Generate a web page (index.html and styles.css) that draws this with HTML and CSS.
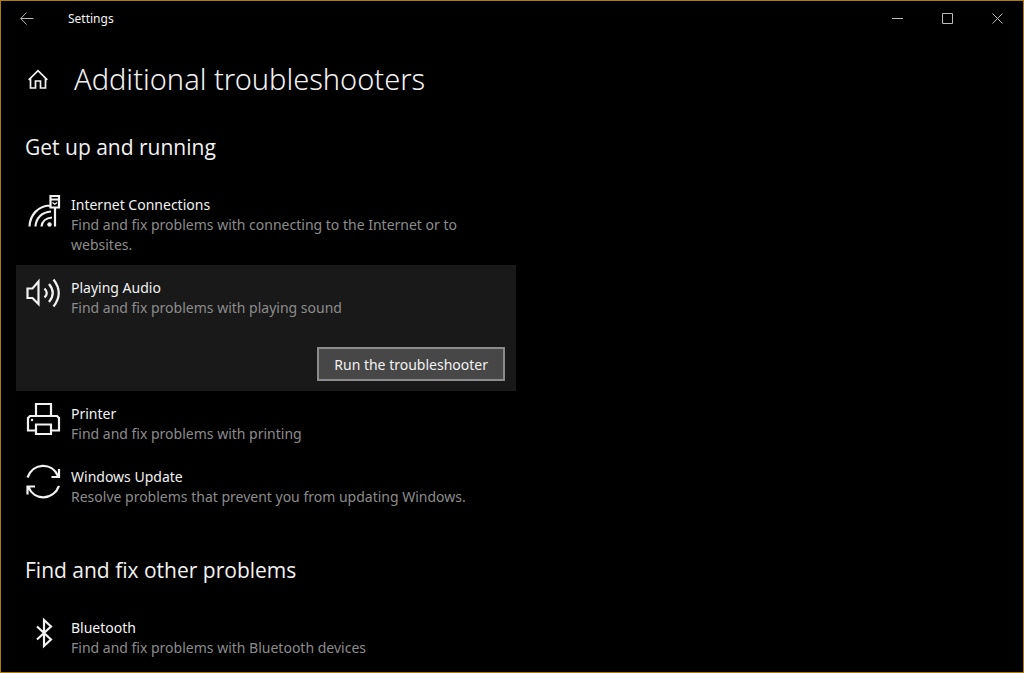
FILE: index.html
```html
<!DOCTYPE html>
<html lang="en">
<head>
  <meta charset="UTF-8">
  <meta name="viewport" content="width=device-width, initial-scale=1.0">
  <title>Settings</title>
  <link rel="stylesheet" href="styles.css">
</head>
<body>
  <div class="window">
    <header class="titlebar">
      <button class="back" aria-label="Back">
        <svg width="14" height="14" viewBox="0 0 14 14"><path d="M6.5 .5L.8 6.500l5.700 6M.8 6.500h12.700"/></svg>
      </button>
      <span class="app-name">Settings</span>
      <div class="window-buttons">
        <button aria-label="Minimize">
          <svg width="12" height="12" viewBox="0 0 12 12"><path d="M0 5.5h11"/></svg>
        </button>
        <button aria-label="Maximize">
          <svg width="12" height="12" viewBox="0 0 12 12"><path d="M.5 .5h10v10h-10z"/></svg>
        </button>
        <button aria-label="Close">
          <svg width="12" height="12" viewBox="0 0 12 12"><path d="M.5 .5l10 10M10.5 .5l-10 10"/></svg>
        </button>
      </div>
    </header>

    <main>
      <div class="page-title">
        <a href="#" class="home" aria-label="Home">
          <svg width="20" height="20" viewBox="0 0 20 20"><path d="M.7 10.8L10 1.7l9.3 9.1M2.500 9.500V19h5v-7h5v7h5V9.500"/></svg>
        </a>
        <h1>Additional troubleshooters</h1>
      </div>

      <section>
        <h2>Get up and running</h2>
        <ul class="list">
          <li class="item">
            <svg class="icon" viewBox="0 0 36 36">
              <path d="M4.5 34.5C5 23 13 14 24.5 13.5M10.5 34.5C11 26 17 20 26 19.5M16.5 34.5C17 29.5 21 26 27 25.5M30 16v18.5M25.5 4h8.5v11.5h-8.5zM25.5 7.5h8.5"/>
              <path class="thin" d="M27.5 10.5l2.3 1.8 2.2-1.8"/>
              <circle class="fill" cx="24.5" cy="32.5" r="2.2"/>
            </svg>
            <div class="text">
              <h3>Internet Connections</h3>
              <p>Find and fix problems with connecting to the Internet or to websites.</p>
            </div>
          </li>
          <li class="item selected">
            <svg class="icon" viewBox="0 0 36 36">
              <path d="M2.5 13.5H7.5L13.5 6.5V29L7.5 23H2.5zM19.5 13.5Q24 18 19.5 22.5M24 9Q31.5 18 24 27M28.5 4.5Q39 18 28.5 31.5"/>
            </svg>
            <div class="text">
              <h3>Playing Audio</h3>
              <p>Find and fix problems with playing sound</p>
            </div>
            <button class="run">Run the troubleshooter</button>
          </li>
          <li class="item">
            <svg class="icon" viewBox="0 0 36 36">
              <path d="M11 15V3h15v12M11 29.5H3V17l2-2h27l2 2v12.5h-8M11 23.5h15V33H11z"/>
              <circle class="fill" cx="7" cy="19" r="1.2"/>
            </svg>
            <div class="text">
              <h3>Printer</h3>
              <p>Find and fix problems with printing</p>
            </div>
          </li>
          <li class="item">
            <svg class="icon" viewBox="0 0 36 36">
              <path d="M2.5 13.5C8-1.5 27-2 33 12M26.5 13h7.5V5M34 22C28 37 9 37 3.5 23M10 22.5H2.5V30.5"/>
            </svg>
            <div class="text">
              <h3>Windows Update</h3>
              <p>Resolve problems that prevent you from updating Windows.</p>
            </div>
          </li>
        </ul>
      </section>

      <section>
        <h2>Find and fix other problems</h2>
        <ul class="list">
          <li class="item">
            <svg class="icon" viewBox="0 0 36 36">
              <path d="M12 11.5L26 24.5 19 31V5L26 11.5 12 24.5"/>
            </svg>
            <div class="text">
              <h3>Bluetooth</h3>
              <p>Find and fix problems with Bluetooth devices</p>
            </div>
          </li>
        </ul>
      </section>
    </main>
  </div>
</body>
</html>
```
FILE: styles.css
```css
* {
  margin: 0;
  padding: 0;
  box-sizing: border-box;
}

body {
  background: #000;
  color: #f2f2f2;
  font-family: "Noto Sans", "Open Sans", sans-serif;
  font-size: 14px;
}

.window {
  min-height: 100vh;
  border: 1px solid #b07d0c;
}

svg {
  display: block;
  fill: none;
  stroke: currentColor;
}

/* Title bar */
.titlebar {
  display: flex;
  align-items: center;
  height: 36px;
}

.titlebar button {
  display: flex;
  align-items: center;
  justify-content: center;
  width: 50px;
  height: 36px;
  background: none;
  border: none;
  color: #bbb;
}

.titlebar .back {
  width: 52px;
}

.app-name {
  margin-left: 15px;
  font-size: 12px;
  line-height: 18px;
}

.window-buttons {
  display: flex;
  margin-left: auto;
}

/* Page heading */
.page-title {
  display: flex;
  align-items: center;
  gap: 26px;
  padding: 20px 27px 0;
}

.home {
  color: #f2f2f2;
}

.home svg {
  stroke-width: 1.7;
}

h1 {
  font-size: 29px;
  font-weight: 300;
  line-height: 44px;
}

/* Sections */
section {
  padding: 30px 15px 0;
}

section + section {
  padding-top: 37px;
}

h2 {
  padding-left: 9px;
  margin-bottom: 19px;
  font-family: "Open Sans", "Noto Sans", sans-serif;
  font-size: 21px;
  font-weight: 400;
  line-height: 32px;
}

.list {
  max-width: 500px;
  list-style: none;
}

.item {
  display: grid;
  grid-template-columns: 36px 1fr;
  column-gap: 10px;
  padding: 10px 11px 10px 9px;
}

.item.selected {
  background: #191919;
}

.icon {
  width: 36px;
  height: 36px;
  stroke-width: 2.2;
}

.icon .thin {
  stroke-width: 1.2;
}

.icon .fill {
  fill: currentColor;
  stroke: none;
}

.text {
  padding-top: 2px;
}

h3 {
  font-size: 14px;
  font-weight: 400;
  line-height: 21px;
}

.text p {
  color: #8c8c8c;
  line-height: 20px;
}

.run {
  grid-column: 2;
  justify-self: end;
  margin-top: 29px;
  padding: 0 15px;
  height: 34px;
  background: #474747;
  border: 2px solid #8b8b8b;
  color: #f2f2f2;
  font: inherit;
}
```
